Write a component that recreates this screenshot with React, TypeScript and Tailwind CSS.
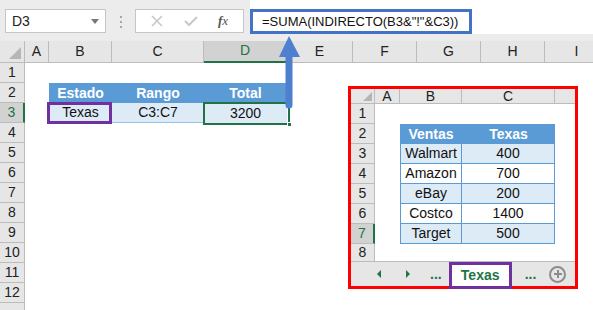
import React from "react";

const FONT = { fontFamily: '"Liberation Sans", Arial, sans-serif' };

const mainCols = ["A", "B", "C", "D", "E", "F", "G", "H", "I"];
const mainRows = [1, 2, 3, 4, 5, 6, 7, 8, 9, 10, 11, 12, 13];

const sales = [
  { name: "Walmart", value: "400" },
  { name: "Amazon", value: "700" },
  { name: "eBay", value: "200" },
  { name: "Costco", value: "1400" },
  { name: "Target", value: "500" },
];

function TopBar() {
  return (
    <div className="flex h-[41px] bg-[#ececec]">
      <div className="flex w-[250px] shrink-0 items-start pt-[9px]">
        {/* name box */}
        <div className="ml-[5px] flex h-[24px] w-[101px] items-center justify-between border border-[#c6c6c6] bg-white pl-[6px] pr-[6px] text-[14px] text-[#222]">
          <span>D3</span>
          <span className="h-0 w-0 border-x-[4px] border-t-[5px] border-x-transparent border-t-[#777]" />
        </div>
        {/* separator dots */}
        <div className="ml-[14px] mt-[7px] flex flex-col gap-[3px]">
          <span className="h-[2px] w-[2px] bg-[#a6a6a6]" />
          <span className="h-[2px] w-[2px] bg-[#a6a6a6]" />
          <span className="h-[2px] w-[2px] bg-[#a6a6a6]" />
        </div>
        {/* cancel / enter / fx */}
        <div className="ml-[13px] flex h-[24px] w-[109px] items-center border border-[#c6c6c6] bg-white">
          <svg width="12" height="12" viewBox="0 0 12 12" className="ml-[15px]">
            <path d="M1 1 L11 11 M11 1 L1 11" stroke="#c8c8c8" strokeWidth="1.6" />
          </svg>
          <svg width="14" height="12" viewBox="0 0 14 12" className="ml-[21px]">
            <path d="M1 6 L5 10 L13 2" stroke="#c8c8c8" strokeWidth="2" fill="none" />
          </svg>
          <span className="ml-[20px] text-[13px] italic text-[#555]" style={{ fontFamily: '"Liberation Serif", serif' }}>
            <b>f</b>x
          </span>
        </div>
      </div>
      <div className="h-[34px] flex-1 bg-white">
        <div className="mt-[9px] flex h-[25px] w-[222px] items-center border-[3px] border-[#4472c4] pl-[9px] text-[13px] text-[#111]">
          =SUMA(INDIRECTO(B3&amp;"!"&amp;C3))
        </div>
      </div>
    </div>
  );
}

function MainSheet() {
  const cellFor = (r: number, c: string) => {
    if (r === 2 && (c === "B" || c === "C" || c === "D")) {
      const label = c === "B" ? "Estado" : c === "C" ? "Rango" : "Total";
      return (
        <div className="flex items-center justify-center bg-[#5b9bd5] text-[14px] font-bold text-white">{label}</div>
      );
    }
    if (r === 3 && c === "B") {
      return (
        <div className="relative flex items-center justify-center border-b border-[#9bc2e6] bg-[#ddebf7] text-[14px] text-[#111]">
          Texas
          <div className="absolute -left-[2px] -top-[1px] bottom-[-2px] right-0 border-[3px] border-[#7030a0]" />
        </div>
      );
    }
    if (r === 3 && c === "C") {
      return (
        <div className="flex items-center justify-center border-b border-[#9bc2e6] bg-[#ddebf7] text-[14px] text-[#111]">C3:C7</div>
      );
    }
    if (r === 3 && c === "D") {
      return (
        <div className="relative flex items-center justify-center bg-[#ddebf7] text-[14px] text-[#111]">
          3200
          <div className="absolute -left-[1px] -top-[1px] bottom-[-2px] right-[-3px] border-2 border-[#217346]" />
          <div className="absolute bottom-[-4px] right-[-5px] h-[5px] w-[5px] border border-white bg-[#217346]" />
        </div>
      );
    }
    return <div className="bg-white" />;
  };

  return (
    <div className="grid grid-cols-[25px_24px_63px_92px_83px_66px_64px_64px_64px_64px] grid-rows-[22px] auto-rows-[20px]">
      {/* column header row */}
      <div className="relative border-b border-r border-[#bcbcbc] bg-[#e6e6e6]">
        <div className="absolute bottom-[3px] right-[3px] h-0 w-0 border-b-[12px] border-l-[12px] border-l-transparent border-b-[#b5b5b5]" />
      </div>
      {mainCols.map((c) =>
        c === "D" ? (
          <div key={c} className="flex items-center justify-center border-b-2 border-r border-b-[#217346] border-r-[#bcbcbc] bg-[#d2d2d2] pb-[1px] text-[14px] text-[#217346]">
            {c}
          </div>
        ) : (
          <div key={c} className="flex items-center justify-center border-b border-r border-[#bcbcbc] bg-[#e6e6e6] text-[14px] text-[#222]">
            {c}
          </div>
        )
      )}
      {mainRows.map((r) => (
        <React.Fragment key={r}>
          {r === 3 ? (
            <div className="flex items-center justify-center border-b border-r-2 border-b-[#bcbcbc] border-r-[#217346] bg-[#d2d2d2] text-[14px] text-[#217346]">
              {r}
            </div>
          ) : (
            <div className="flex items-center justify-center border-b border-r border-[#bcbcbc] bg-[#e6e6e6] text-[14px] text-[#222]">
              {r < 13 ? r : ""}
            </div>
          )}
          {mainCols.map((c) => (
            <React.Fragment key={c}>{cellFor(r, c)}</React.Fragment>
          ))}
        </React.Fragment>
      ))}
    </div>
  );
}

function TexasSheet() {
  const hdr = "flex items-center justify-center border-b border-r border-[#bcbcbc] bg-[#e6e6e6] text-[14px] text-[#222]";
  return (
    <div className="absolute left-[348px] top-[86px] h-[203px] w-[230px] border-[3px] border-[#ff0000] bg-white">
      <div className="grid grid-cols-[24px_25px_62px_93px_20px] grid-rows-[15px_repeat(7,20px)_17px]">
        <div className="relative border-b border-r border-[#bcbcbc] bg-[#e6e6e6]">
          <div className="absolute bottom-[2px] right-[2px] h-0 w-0 border-b-[9px] border-l-[9px] border-l-transparent border-b-[#b5b5b5]" />
        </div>
        <div className={hdr}>A</div>
        <div className={hdr}>B</div>
        <div className={hdr}>C</div>
        <div className="border-b border-[#bcbcbc] bg-[#e6e6e6]" />

        {/* row 1 */}
        <div className={hdr}>1</div>
        <div className="col-span-4" />

        {/* row 2 header */}
        <div className={hdr}>2</div>
        <div />
        <div className="flex items-center justify-center bg-[#5b9bd5] text-[14px] font-bold text-white">Ventas</div>
        <div className="flex items-center justify-center bg-[#5b9bd5] text-[14px] font-bold text-white">Texas</div>
        <div />

        {sales.map((s, i) => {
          const rowNum = i + 3;
          const fill = i % 2 === 0 ? "bg-[#ddebf7]" : "bg-white";
          return (
            <React.Fragment key={s.name}>
              {rowNum === 7 ? (
                <div className="flex items-center justify-center border-b border-r-2 border-b-[#bcbcbc] border-r-[#217346] bg-[#d2d2d2] text-[14px] text-[#217346]">
                  {rowNum}
                </div>
              ) : (
                <div className={hdr}>{rowNum}</div>
              )}
              <div />
              <div className={`flex items-center justify-center border-b border-l border-r border-[#5b9bd5] ${fill} text-[14px] text-[#111]`}>
                {s.name}
              </div>
              <div className={`flex items-center justify-center border-b border-r border-[#5b9bd5] ${fill} text-[14px] text-[#111]`}>
                {s.value}
              </div>
              <div />
            </React.Fragment>
          );
        })}

        {/* row 8 */}
        <div className="flex items-start justify-center border-r border-[#bcbcbc] bg-[#e6e6e6] text-[14px] leading-[17px] text-[#222]">8</div>
        <div className="col-span-4" />
      </div>

      {/* sheet tabs */}
      <div className="relative flex h-[25px] items-center border-t border-[#bcbcbc] bg-[#e6e6e6]">
        <span className="ml-[26px] h-0 w-0 border-y-[4px] border-r-[4px] border-y-transparent border-r-[#217346]" />
        <span className="ml-[25px] h-0 w-0 border-y-[4px] border-l-[4px] border-y-transparent border-l-[#217346]" />
        <span className="ml-[20px] text-[14px] font-bold leading-none text-[#217346]">...</span>
        <div className="ml-[7px] flex h-[27px] w-[63px] shrink-0 items-center justify-center self-start border-[3px] border-[#7030a0] bg-white">
          <span className="text-[14px] font-bold text-[#217346]">Texas</span>
        </div>
        <span className="ml-[13px] text-[14px] font-bold leading-none text-[#217346]">...</span>
        <span className="ml-[13px] flex h-[17px] w-[17px] items-center justify-center rounded-full border-2 border-[#8c8c8c]">
          <svg width="8" height="8" viewBox="0 0 8 8">
            <path d="M4 0 V8 M0 4 H8" stroke="#8c8c8c" strokeWidth="2" />
          </svg>
        </span>
      </div>
    </div>
  );
}

function Arrow() {
  return (
    <svg className="absolute left-[278px] top-[36px]" width="24" height="76" viewBox="0 0 24 76">
      <path d="M11 0 L22 21 L1 21 Z" fill="#4f7fcf" />
      <path d="M7.5 20 H14.5 V69 A3.5 3.5 0 0 1 7.5 69 Z" fill="#4f7fcf" />
    </svg>
  );
}

export default function App() {
  return (
    <div className="relative h-[310px] w-[593px] overflow-hidden bg-white" style={FONT}>
      <TopBar />
      <MainSheet />
      <TexasSheet />
      <Arrow />
    </div>
  );
}
